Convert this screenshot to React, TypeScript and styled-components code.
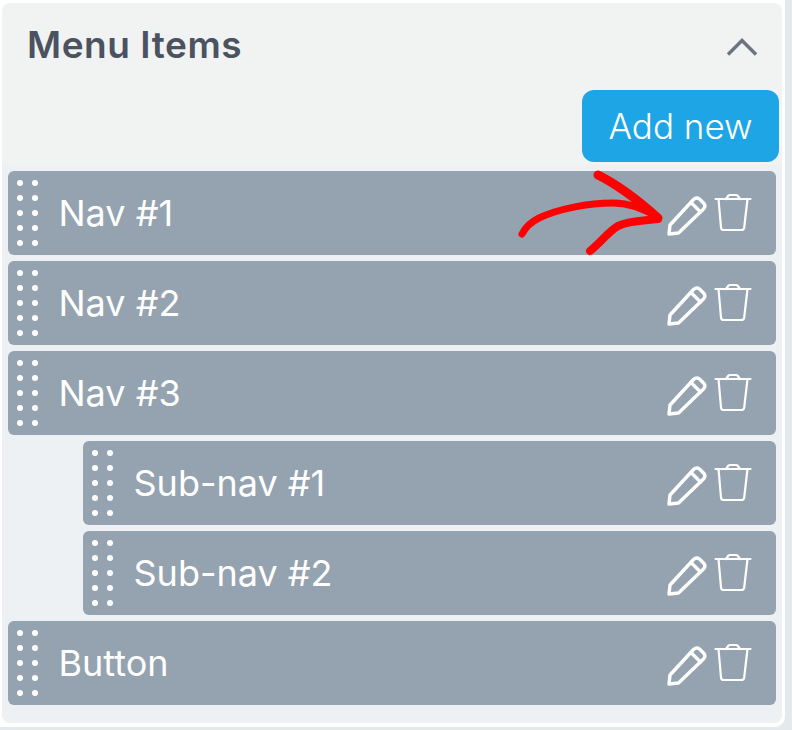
import React from 'react';
import styled, { createGlobalStyle } from 'styled-components';

const GlobalStyle = createGlobalStyle`
  html, body {
    margin: 0;
    padding: 0;
    background: #e4eaec;
    font-family: 'Inter', 'Noto Sans', sans-serif;
  }
  * { box-sizing: border-box; }
`;

const Frame = styled.div`
  width: 785px;
  height: 727px;
  padding: 3px 3px 4px 2px;
  background: #ffffff;
  border-radius: 0 0 10px 0;
`;

const Panel = styled.section`
  height: 100%;
  background: #f1f3f3;
  border-radius: 8px;
  overflow: hidden;
`;

const Header = styled.header`
  height: 87px;
  padding: 0 24px 0 25px;
  display: flex;
  align-items: center;
  justify-content: space-between;
`;

const Title = styled.h2`
  margin: 0 0 4px;
  font-size: 37px;
  font-weight: 600;
  letter-spacing: 0.55px;
  color: #4b5260;
`;

const Toolbar = styled.div`
  display: flex;
  justify-content: flex-end;
  padding-right: 3px;
  height: 75px;
`;

const AddButton = styled.button`
  width: 197px;
  height: 72px;
  border: 0;
  border-radius: 12px;
  background: #1ea5e5;
  color: #ffffff;
  font-family: inherit;
  font-size: 35px;
  font-weight: 300;
`;

const List = styled.div`
  display: flex;
  flex-direction: column;
  gap: 6px;
  padding: 6px;
  background: #edf1f4;
  height: 558px;
`;

const Row = styled.div<{ $nested?: boolean }>`
  position: relative;
  height: 84px;
  margin-left: ${p => (p.$nested ? '75px' : '0')};
  padding: 0 24px 0 9px;
  display: flex;
  align-items: center;
  background: #94a3af;
  border-radius: 6px;
  color: #ffffff;
`;

const Grip = styled.div`
  display: grid;
  grid-template-columns: 6px 6px;
  grid-auto-rows: 6px;
  column-gap: 9px;
  row-gap: 9px;
  margin-right: 20.5px;

  span {
    border-radius: 50%;
    background: #ffffff;
  }
`;

const Label = styled.span`
  flex: 1;
  font-size: 36px;
  font-weight: 400;
`;

const Actions = styled.div`
  display: flex;
  align-items: center;
  gap: 6px;
`;

const PencilIcon = styled.svg`
  width: 42px;
  height: 42px;
  margin-top: 5px;
`;

const TrashIcon = styled.svg`
  width: 38px;
  height: 40px;
`;

const Chevron = styled.svg`
  width: 32px;
  height: 18px;
`;

const Scribble = styled.svg`
  position: absolute;
  left: 505px;
  top: -3px;
  width: 150px;
  height: 90px;
  pointer-events: none;
`;

const Pencil = () => (
  <PencilIcon viewBox="0 0 42 42" fill="none" stroke="#fff" strokeWidth="3.4" strokeLinejoin="round" strokeLinecap="round">
    <path d="M3 39 L4 30 L27.5 4.5 Q30.5 1.8 33.5 4 L38 8.5 Q40 11.5 37.5 14 L12.5 38 Z" />
    <path d="M25 7.5 L34.5 17" />
  </PencilIcon>
);

const Trash = () => (
  <TrashIcon viewBox="0 0 38 40" fill="none" stroke="#fff" strokeWidth="2.2" strokeLinejoin="round" strokeLinecap="round">
    <path d="M1.5 6 H36.5" />
    <path d="M4.5 6 L7 34.5 Q7.3 37 9.5 37 H27.5 Q29.8 37 30.2 34.5 L33.5 6" />
    <path d="M12 6 L14.5 2.5 Q15 2 16 2 H22 Q23 2 23.5 2.5 L26 6" />
  </TrashIcon>
);

const items = [
  { label: 'Nav #1' },
  { label: 'Nav #2' },
  { label: 'Nav #3' },
  { label: 'Sub-nav #1', nested: true },
  { label: 'Sub-nav #2', nested: true },
  { label: 'Button' },
];

const App: React.FC = () => (
  <Frame>
    <GlobalStyle />
    <Panel>
      <Header>
        <Title>Menu Items</Title>
        <Chevron viewBox="0 0 32 18" fill="none" stroke="#6b7480" strokeWidth="3.5">
          <path d="M2 16.5 L16 2.5 L30 16.5" />
        </Chevron>
      </Header>
      <Toolbar>
        <AddButton>Add new</AddButton>
      </Toolbar>
      <List>
        {items.map((item, i) => (
          <Row key={item.label} $nested={item.nested}>
            <Grip>
              {Array.from({ length: 10 }).map((_, d) => (
                <span key={d} />
              ))}
            </Grip>
            <Label>{item.label}</Label>
            <Actions>
              <Pencil />
              <Trash />
            </Actions>
            {i === 0 && (
              <Scribble viewBox="0 0 150 90" fill="none" stroke="#fe0000" strokeLinecap="round" strokeLinejoin="round">
                <path d="M9 66 C12 60 18 54 26 50 C45 41 75 35 100 35 C118 35 132 41 145 50" strokeWidth="7" />
                <path d="M85 7 C105 17 125 32 145 50" strokeWidth="9" />
                <path d="M77 83 C88 74 95 64 105 58 C118 52 130 53 145 51" strokeWidth="8" />
              </Scribble>
            )}
          </Row>
        ))}
      </List>
    </Panel>
  </Frame>
);

export default App;
